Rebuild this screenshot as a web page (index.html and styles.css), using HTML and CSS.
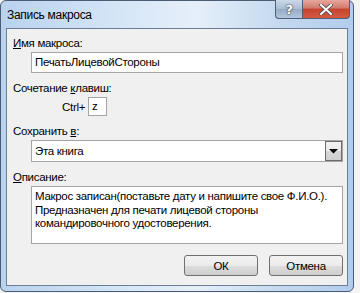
FILE: index.html
```html
<!DOCTYPE html>
<html lang="ru">
<head>
  <meta charset="UTF-8">
  <title>Запись макроса</title>
  <link rel="stylesheet" href="styles.css">
</head>
<body>
  <div class="window">
    <div class="titlebar">
      <span class="title">Запись макроса</span>
      <div class="caption-buttons">
        <div class="cap-btn help">?</div>
        <div class="cap-btn close">
          <svg width="14" height="11" viewBox="0 0 14 11">
            <path d="M2 1 L12 10 M12 1 L2 10" stroke="#4a4a4a" stroke-width="3.6" stroke-linecap="square"/>
            <path d="M2 1 L12 10 M12 1 L2 10" stroke="#fff" stroke-width="2" stroke-linecap="square"/>
          </svg>
        </div>
      </div>
    </div>

    <div class="client">
      <div class="label"><u>И</u>мя макроса:</div>
      <div class="field text-input">ПечатьЛицевойСтороны</div>

      <div class="label">Сочетание <u>к</u>лавиш:</div>
      <div class="shortcut">
        <span>Ctrl+</span>
        <div class="key-box">z</div>
      </div>

      <div class="label">Сохранить <u>в</u>:</div>
      <div class="field combo">
        <span>Эта книга</span>
        <div class="combo-btn">
          <svg width="9" height="5" viewBox="0 0 9 5"><path d="M0 0 H9 L4.5 4.5 Z" fill="#000"/></svg>
        </div>
      </div>

      <div class="label"><u>О</u>писание:</div>
      <div class="field memo">Макрос записан(поставьте дату и напишите свое Ф.И.О.).<br>Предназначен для печати лицевой стороны<br>командировочного удостоверения.</div>

      <div class="button-row">
        <button type="button">ОК</button>
        <button type="button">Отмена</button>
      </div>
    </div>
  </div>
</body>
</html>
```

FILE: styles.css
```css
body {
  margin: 0;
  background: #f4f4f4;
  font-family: "Liberation Sans", Arial, sans-serif;
  font-size: 11.5px;
  letter-spacing: -0.3px;
  color: #000;
}
.window {
  width: 354px;
  height: 292px;
  box-sizing: border-box;
  border: 1px solid #4b5d72;
  border-radius: 6px;
  background: linear-gradient(to right, #b9d2ee 0%, #d6e6f7 35%, #e6eff9 55%, #c3d8ef 80%, #b1cdec 100%);
  display: flex;
  flex-direction: column;
}
.titlebar {
  height: 27px;
  display: flex;
  align-items: flex-start;
  justify-content: space-between;
}
.title {
  margin: 7px 0 0 6px;
  line-height: 15px;
  font-size: 12px;
}
.caption-buttons {
  display: flex;
  margin-right: 3px;
  margin-top: -1px;
}
.cap-btn {
  height: 18px;
  display: flex;
  align-items: center;
  justify-content: center;
  border: 1px solid #4f6078;
  border-top: none;
}
.help {
  width: 26px;
  border-radius: 0 0 0 4px;
  border-right: none;
  background: linear-gradient(#cbd9e8, #a9bdd3 50%, #95abc4 51%, #b2c6dc);
  color: #fff;
  font-family: "DejaVu Sans", sans-serif;
  font-weight: bold;
  font-size: 13px;
  text-shadow: 0 0 2px #333, 0 0 1px #333;
}
.close {
  width: 46px;
  border-radius: 0 0 4px 0;
  background: linear-gradient(#e7a89e, #d27a6c 45%, #c6422f 50%, #d45a43);
}
.client {
  flex: 1;
  margin: 0 5px 5px 5px;
  border: 1px solid #6d7f95;
  background: #f0f0f0;
  padding: 7px 4px 0 6px;
  display: flex;
  flex-direction: column;
}
.label {
  line-height: 15px;
  margin-bottom: 1px;
}
.field {
  margin-left: 18px;
  background: #fff;
  border: 1px solid #a5a5a5;
  box-sizing: border-box;
  margin-bottom: 8px;
}
.text-input {
  height: 21px;
  line-height: 19px;
  padding-left: 3px;
}
.shortcut {
  display: flex;
  align-items: center;
  margin-left: 49px;
  margin-bottom: 8px;
}
.key-box {
  width: 19px;
  height: 19px;
  box-sizing: border-box;
  border: 1px solid #a5a5a5;
  background: #fff;
  margin-left: 3px;
  padding-left: 3px;
  line-height: 17px;
}
.combo {
  height: 22px;
  display: flex;
  align-items: center;
  justify-content: space-between;
  padding-left: 3px;
}
.combo-btn {
  width: 17px;
  height: 20px;
  box-sizing: border-box;
  border: 1px solid #6b6b6b;
  background: linear-gradient(#f2f2f2, #ebebeb 50%, #d6d6d6 51%, #cfcfcf);
  display: flex;
  align-items: center;
  justify-content: center;
}
.memo {
  height: 58px;
  padding: 3px 3px;
  line-height: 13.5px;
  white-space: nowrap;
  overflow: hidden;
  margin-bottom: 11px;
}
.button-row {
  display: flex;
  justify-content: flex-end;
  gap: 11px;
}
button {
  width: 74px;
  height: 21px;
  font-family: inherit;
  font-size: 11.5px;
  letter-spacing: -0.3px;
  border: 1px solid #707070;
  border-radius: 3px;
  background: linear-gradient(#f2f2f2, #ebebeb 50%, #dddddd 51%, #cfcfcf);
  padding: 0;
  color: #000;
}
```
